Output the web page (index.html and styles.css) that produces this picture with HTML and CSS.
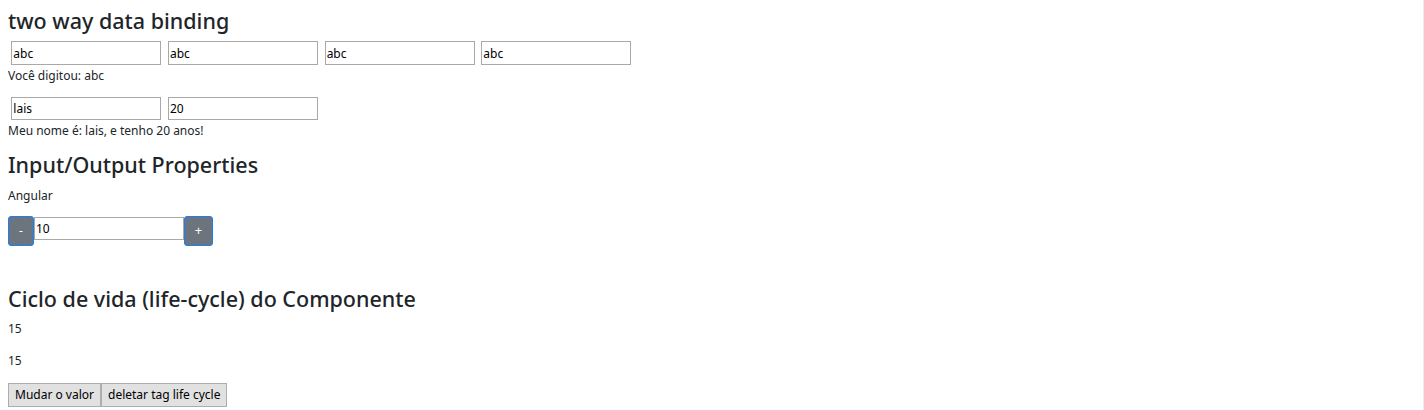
FILE: index.html
```html
<!DOCTYPE html>
<html lang="pt">
<head>
<meta charset="utf-8">
<title>Angular</title>
<link rel="stylesheet" href="styles.css">
</head>
<body>
<h3 class="title">two way data binding</h3>
<div class="row"><input class="field" value="abc"><input class="field" value="abc"><input class="field" value="abc"><input class="field" value="abc"></div>
<p class="text snug">Você digitou: abc</p>
<div class="row"><input class="field" value="lais"><input class="field" value="20"></div>
<p class="text snug">Meu nome é: lais, e tenho 20 anos!</p>
<h3 class="title">Input/Output Properties</h3>
<p class="text short">Angular</p>
<div class="counter"><button class="btn-sec minus">-</button><input class="field tight" value="10"><button class="btn-sec plus">+</button></div>
<h3 class="title spaced">Ciclo de vida (life-cycle) do Componente</h3>
<p class="text">15</p>
<p class="text">15</p>
<div class="actions"><button class="plain">Mudar o valor</button><button class="plain">deletar tag life cycle</button></div>
</body>
</html>
```

FILE: styles.css
```css
html {
  border-right: 1px solid #ececec;
}
body {
  margin: 8px;
  font-family: "Noto Sans", "Open Sans", sans-serif;
  font-size: 12px;
  line-height: 19.2px;
  color: #212529;
  background: #fff;
}
.title {
  margin: 0 0 6.4px;
  font-size: 21.5px;
  font-weight: 500;
  line-height: 26.88px;
}
.text {
  margin: 0 0 12.8px;
}
.text.snug {
  margin-bottom: 11.8px;
}
.text.short {
  margin-bottom: 10.8px;
}
.row {
  display: flex;
  padding-bottom: 1px;
}
.field {
  box-sizing: border-box;
  width: 150px;
  height: 23.5px;
  margin: 0 3.33px;
  padding: 1px 1px;
  border: 1px solid #a9a9a9;
  font: inherit;
  color: #000;
  background: #fff;
}
.field.tight {
  margin: 0;
}
.counter {
  display: flex;
  align-items: flex-start;
}
.counter .field {
  margin-top: 1px;
}
.btn-sec {
  box-sizing: border-box;
  height: 30px;
  padding: 0;
  border: 1px solid #1a7ef5;
  border-radius: 3px;
  background: #6c757d;
  color: #fff;
  font: inherit;
}
.minus {
  width: 26px;
}
.plus {
  width: 29px;
  font-size: 13px;
}
.spaced {
  margin-top: 40px;
}
.actions {
  display: flex;
}
.plain {
  box-sizing: border-box;
  height: 24px;
  padding: 0 6px;
  border: 1px solid #adadad;
  background: #e1e1e1;
  color: #000;
  font: inherit;
}
```
